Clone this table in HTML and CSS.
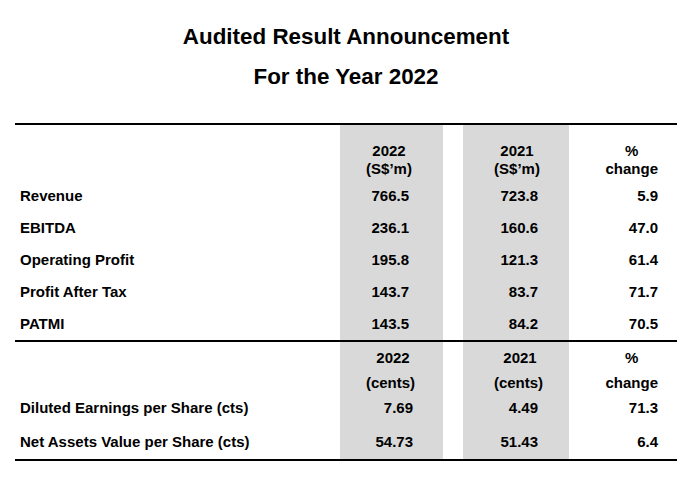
FILE: index.html
```html
<!DOCTYPE html>
<html lang="en">
<head>
<meta charset="utf-8">
<title>Audited Result Announcement</title>
<link rel="stylesheet" href="styles.css">
</head>
<body>
<div class="page">
  <header class="title">
    <h1>Audited Result Announcement</h1>
    <h2>For the Year 2022</h2>
  </header>
  <table class="results">
    <colgroup>
      <col class="c-label">
      <col class="c-y1">
      <col class="c-gap">
      <col class="c-y2">
      <col class="c-pct">
    </colgroup>
    <tbody>
      <tr class="head head-top">
        <td class="label"></td>
        <td class="y1 hcell"><span>2022</span><span>(S$’m)</span></td>
        <td class="gap"></td>
        <td class="y2 hcell"><span>2021</span><span>(S$’m)</span></td>
        <td class="pct"><span class="ph"><span>%</span><span>change</span></span></td>
      </tr>
      <tr class="row">
        <td class="label">Revenue</td>
        <td class="y1 num">766.5</td>
        <td class="gap"></td>
        <td class="y2 num">723.8</td>
        <td class="pct">5.9</td>
      </tr>
      <tr class="row">
        <td class="label">EBITDA</td>
        <td class="y1 num">236.1</td>
        <td class="gap"></td>
        <td class="y2 num">160.6</td>
        <td class="pct">47.0</td>
      </tr>
      <tr class="row">
        <td class="label">Operating Profit</td>
        <td class="y1 num">195.8</td>
        <td class="gap"></td>
        <td class="y2 num">121.3</td>
        <td class="pct">61.4</td>
      </tr>
      <tr class="row">
        <td class="label">Profit After Tax</td>
        <td class="y1 num">143.7</td>
        <td class="gap"></td>
        <td class="y2 num">83.7</td>
        <td class="pct">71.7</td>
      </tr>
      <tr class="row">
        <td class="label">PATMI</td>
        <td class="y1 num">143.5</td>
        <td class="gap"></td>
        <td class="y2 num">84.2</td>
        <td class="pct">70.5</td>
      </tr>
      <tr class="head head-low">
        <td class="label"></td>
        <td class="y1 hcell low1"><span class="a">2022</span><span class="b">(cents)</span></td>
        <td class="gap"></td>
        <td class="y2 hcell low2"><span class="a">2021</span><span class="b">(cents)</span></td>
        <td class="pct"><span class="ph"><span>%</span><span>change</span></span></td>
      </tr>
      <tr class="row-eps">
        <td class="label">Diluted Earnings per Share (cts)</td>
        <td class="y1 num low">7.69</td>
        <td class="gap"></td>
        <td class="y2 num">4.49</td>
        <td class="pct">71.3</td>
      </tr>
      <tr class="row-nav">
        <td class="label">Net Assets Value per Share (cts)</td>
        <td class="y1 num low">54.73</td>
        <td class="gap"></td>
        <td class="y2 num">51.43</td>
        <td class="pct">6.4</td>
      </tr>
    </tbody>
  </table>
</div>
</body>
</html>
```

FILE: styles.css
```css
html, body {
  margin: 0;
  padding: 0;
  background: #ffffff;
}

body {
  font-family: "Liberation Sans", Arial, sans-serif;
  color: #000000;
}

.page {
  width: 662px;
  margin-left: 15px;
  padding-top: 17px;
}

.title {
  text-align: center;
  font-weight: bold;
  line-height: 40px;
}

.title h1,
.title h2 {
  margin: 0;
  font-size: 22.4px;
  font-weight: bold;
  line-height: 40px;
}

.results {
  margin-top: 26px;
  width: 662px;
  table-layout: fixed;
  border-collapse: separate;
  border-spacing: 0;
  font-size: 15px;
  font-weight: bold;
}

.c-label { width: 325px; }
.c-y1 { width: 103px; }
.c-gap { width: 20px; }
.c-y2 { width: 106px; }
.c-pct { width: 108px; }

.results td {
  padding: 0;
  vertical-align: top;
  white-space: nowrap;
}

.results .y1,
.results .y2 {
  background: #d9d9d9;
}

.label {
  padding-left: 5px !important;
  text-align: left;
}

.pct {
  text-align: right;
  padding-right: 19px !important;
}

.ph {
  display: inline-block;
  text-align: center;
}

.ph span,
.hcell span {
  display: block;
}

.num {
  text-align: right;
}

.y1.num { padding-right: 34px !important; }
.y1.num.low { padding-right: 30px !important; }
.y2.num { padding-right: 31px !important; }

.hcell {
  text-align: center;
}

.y1.hcell { padding-right: 5px !important; }
.y2.hcell { padding-left: 2px !important; }

.low1 .a { padding-left: 8px; }
.low1 .b { padding-left: 3px; }
.low2 .a { padding-left: 6px; }
.low2 .b { padding-left: 3px; }

/* vertical rhythm */
.head-top td {
  border-top: 2px solid #000;
  padding-top: 17px;
  padding-bottom: 3px;
  line-height: 17.5px;
}

.row td {
  line-height: 32px;
}

.head-low td {
  border-top: 2px solid #000;
  padding-top: 3px;
  line-height: 25px;
}

.row-eps td {
  line-height: 26px;
}

.row-nav td {
  border-bottom: 2px solid #000;
  padding-top: 5px;
  padding-bottom: 1px;
  line-height: 32px;
}
```
